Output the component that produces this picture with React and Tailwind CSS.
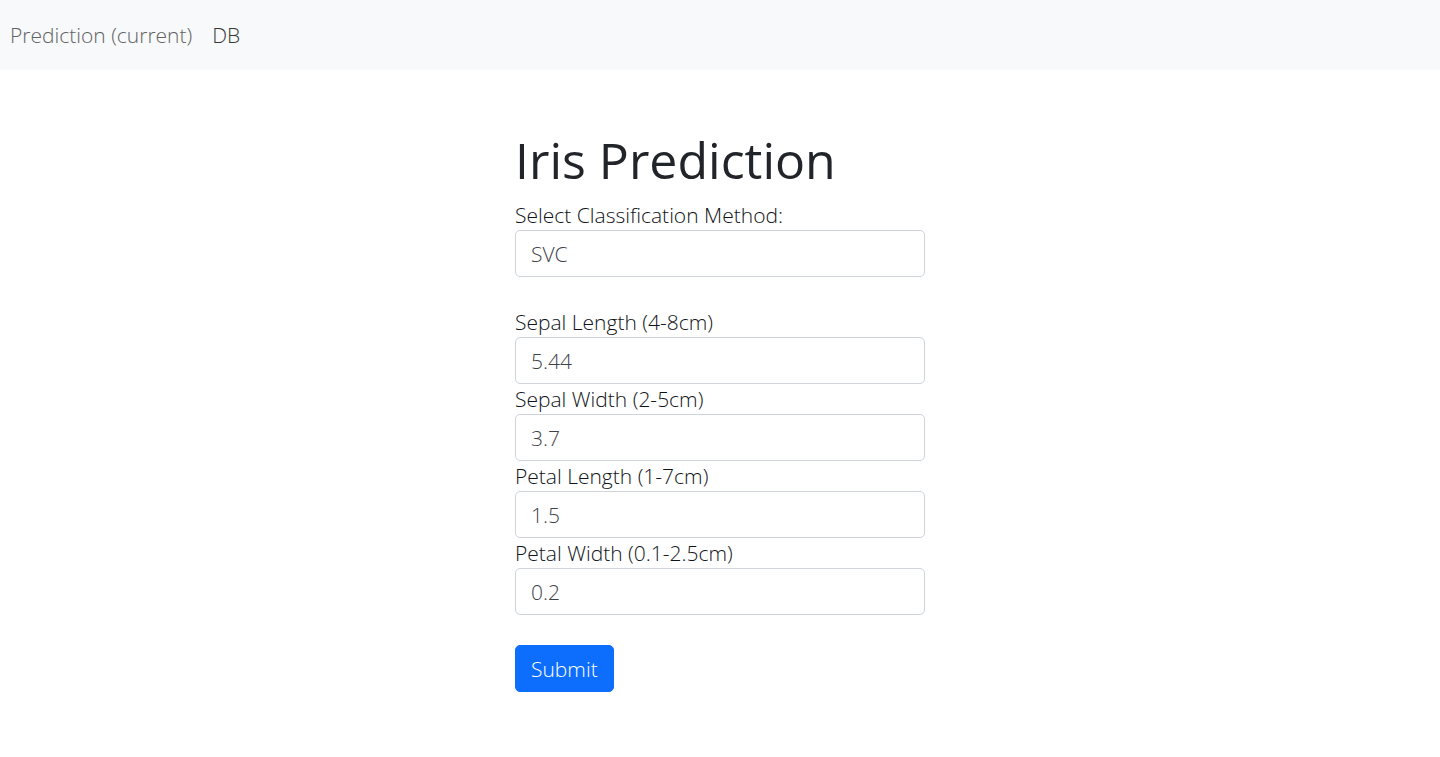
import { useState } from 'react';

const fields = [
  { id: 'sepal-length', label: 'Sepal Length (4-8cm)', value: '5.44' },
  { id: 'sepal-width', label: 'Sepal Width (2-5cm)', value: '3.7' },
  { id: 'petal-length', label: 'Petal Length (1-7cm)', value: '1.5' },
  { id: 'petal-width', label: 'Petal Width (0.1-2.5cm)', value: '0.2' },
];

const control =
  'block h-[47px] w-full appearance-none rounded-[5px] border border-[#ced4da] bg-white px-[15px] text-[21px] font-light text-[#3c4248]';

export default function App() {
  const [method, setMethod] = useState('SVC');

  return (
    <div className="font-['Open_Sans','Noto_Sans',sans-serif] text-[21px] leading-[30px] font-light text-[#101418]">
      <nav className="flex h-[70px] items-center gap-5 bg-[#f8f9fa] px-2.5">
        <a href="#prediction" className="text-[#626364]">Prediction (current)</a>
        <a href="#db" className="text-[#363738]">DB</a>
      </nav>
      <main className="mx-auto w-full max-w-[410px] pt-[60px]">
        <h1 className="mb-2.5 text-[50px] leading-[60px] font-normal text-[#212529]">Iris Prediction</h1>
        <form onSubmit={(e) => e.preventDefault()}>
          <label htmlFor="method" className="block">Select Classification Method:</label>
          <select
            id="method"
            className={control}
            value={method}
            onChange={(e) => setMethod(e.target.value)}
          >
            <option>SVC</option>
            <option>KNN</option>
          </select>
          <div className="pt-[30px]">
            {fields.map((f) => (
              <div key={f.id}>
                <label htmlFor={f.id} className="block">{f.label}</label>
                <input id={f.id} type="text" defaultValue={f.value} className={control} />
              </div>
            ))}
          </div>
          <button
            type="submit"
            className="mt-[30px] h-[47px] rounded-[5px] border border-[#0d6efd] bg-[#0d6efd] px-[15px] text-white"
          >
            Submit
          </button>
        </form>
      </main>
    </div>
  );
}
